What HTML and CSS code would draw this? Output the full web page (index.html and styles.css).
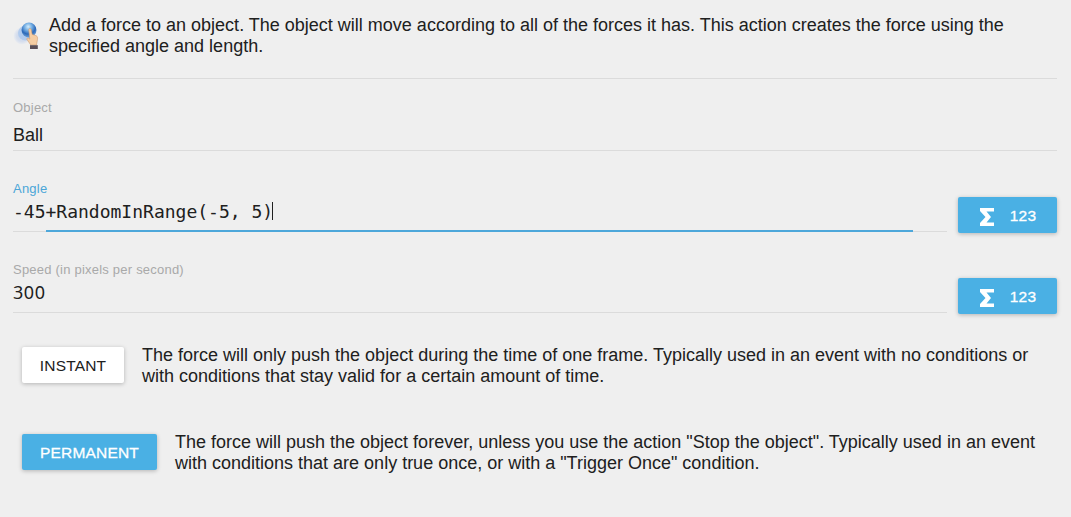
FILE: index.html
```html
<!DOCTYPE html>
<html lang="en">
<head>
<meta charset="utf-8">
<title>Add a force</title>
<link rel="stylesheet" href="styles.css">
</head>
<body>
<main class="editor">
  <header class="intro">
    <svg class="intro-icon" viewBox="0 0 27 30" aria-hidden="true">
      <defs>
        <radialGradient id="ball" cx="45%" cy="28%" r="70%">
          <stop offset="0" stop-color="#d3ecfb"/>
          <stop offset=".35" stop-color="#77b0e4"/>
          <stop offset=".7" stop-color="#2c69b9"/>
          <stop offset="1" stop-color="#6c9ed5"/>
        </radialGradient>
        <radialGradient id="trail">
          <stop offset="0" stop-color="#a9c2ea"/>
          <stop offset=".65" stop-color="#c5d3ed"/>
          <stop offset="1" stop-color="#e9ecf2"/>
        </radialGradient>
      </defs>
      <circle cx="9" cy="15" r="8.500" fill="url(#trail)" opacity=".6"/>
      <circle cx="12.500" cy="12" r="7.500" fill="#a9c7ed" opacity=".8"/>
      <circle cx="16" cy="9" r="7.500" fill="url(#ball)"/>
      <path d="M15.700 8.500c.3-1.300 2.200-1.200 2.500.1l1 4.800 4 1.300c1.300.6 1.500 2 1.300 3.500l-1 5.800h-5.700l-3.800-5.500c-.5-1.200.8-1.900 1.600-1.200l1.200.8z" fill="#f5cda3" stroke="#cf9b70" stroke-width=".6"/>
      <path d="M17 24.200h7.800v3.800H17z" fill="#594e57"/>
    </svg>
    <p class="text">Add a force to an object. The object will move according to all of the forces it has. This action creates the force using the<br>specified angle and length.</p>
  </header>

  <section class="field field-object">
    <label class="label">Object</label>
    <div class="value">Ball</div>
  </section>

  <section class="row">
    <div class="field focused">
      <label class="label">Angle</label>
      <div class="value code">-45+RandomInRange(-5, 5)<span class="caret"></span></div>
      <span class="focus-line"></span>
    </div>
    <button class="button primary expression">
      <svg class="sigma" viewBox="0 0 14 18" aria-hidden="true"><path d="M0 0h14v3.500H6.500L11 9l-4.500 5.500H14V18H0v-3l5.500-6L0 3z" fill="#fff"/></svg>
      <span class="digits">123</span>
    </button>
  </section>

  <section class="row">
    <div class="field">
      <label class="label">Speed (in pixels per second)</label>
      <div class="value number">300</div>
    </div>
    <button class="button primary expression">
      <svg class="sigma" viewBox="0 0 14 18" aria-hidden="true"><path d="M0 0h14v3.500H6.500L11 9l-4.500 5.500H14V18H0v-3l5.500-6L0 3z" fill="#fff"/></svg>
      <span class="digits">123</span>
    </button>
  </section>

  <section class="choice choice-instant">
    <button class="button instant">INSTANT</button>
    <p class="text">The force will only push the object during the time of one frame. Typically used in an event with no conditions or<br>with conditions that stay valid for a certain amount of time.</p>
  </section>

  <section class="choice choice-permanent">
    <button class="button primary permanent">PERMANENT</button>
    <p class="text">The force will push the object forever, unless you use the action "Stop the object". Typically used in an event<br>with conditions that are only true once, or with a "Trigger Once" condition.</p>
  </section>
</main>
</body>
</html>
```
FILE: styles.css
```css
* { box-sizing: border-box; }

body {
  margin: 0;
  background: #efefef;
  color: #202020;
  font-family: "Liberation Sans", Arial, sans-serif;
  overflow: hidden;
}

.editor {
  height: 517px;
  padding: 0 14px 0 13px;
}

.text {
  margin: 0;
  font-size: 18px;
  line-height: 21px;
  white-space: nowrap;
}

.intro {
  display: flex;
  height: 79px;
  padding-top: 15px;
  border-bottom: 1px solid #dbdbdb;
}

.intro-icon {
  flex: none;
  width: 27px;
  height: 30px;
  margin: 6px 9px 0 0;
}

.field {
  position: relative;
  flex: 1;
  height: 81px;
  padding-top: 28px;
  border-bottom: 1px solid #dbdbdb;
}

.field-object { height: 72px; padding-top: 19px; }

.label {
  display: block;
  height: 18px;
  font-size: 13px;
  line-height: 20px;
  letter-spacing: .22px;
  color: #a9a9a9;
}

.focused .label { color: #4ba6d8; }

.value {
  display: flex;
  align-items: center;
  height: 28px;
  font-size: 18px;
  white-space: pre;
}

.field-object .value { height: 39px; }

.code { font-family: "DejaVu Sans Mono", monospace; }

.number {
  font-family: "Noto Sans", sans-serif;
  letter-spacing: .54px;
}

.caret {
  width: 1px;
  height: 18px;
  margin-left: -1px;
  background: #202020;
}

.focus-line {
  position: absolute;
  left: 33px;
  right: 34px;
  bottom: -1px;
  height: 2px;
  background: #4da7da;
}

.row {
  display: flex;
  gap: 11px;
  height: 81px;
}

.button {
  flex: none;
  display: flex;
  align-items: center;
  justify-content: center;
  height: 36px;
  padding: 0;
  border: 0;
  border-radius: 2px;
  background: #fff;
  color: #202020;
  font: 15.500px "Liberation Sans", Arial, sans-serif;
  letter-spacing: .18px;
  box-shadow: 0 1px 4px rgba(0, 0, 0, .25);
}

.primary {
  background: #4ab0e4;
  color: #fff;
  -webkit-text-stroke: .3px #fff;
}

.expression {
  width: 99px;
  margin-top: 46px;
  padding-left: 1px;
  gap: 16px;
}

.digits { padding-top: 2px; }

.sigma { width: 14px; height: 18px; margin-top: 4px; }

.choice {
  display: flex;
  gap: 18px;
  padding-left: 9px;
}

.choice-instant { padding-top: 32px; }
.choice-permanent { padding-top: 45px; }
.choice .button { margin-top: 2px; padding-top: 2px; }
.instant { width: 102px; }
.permanent { width: 135px; }
```
